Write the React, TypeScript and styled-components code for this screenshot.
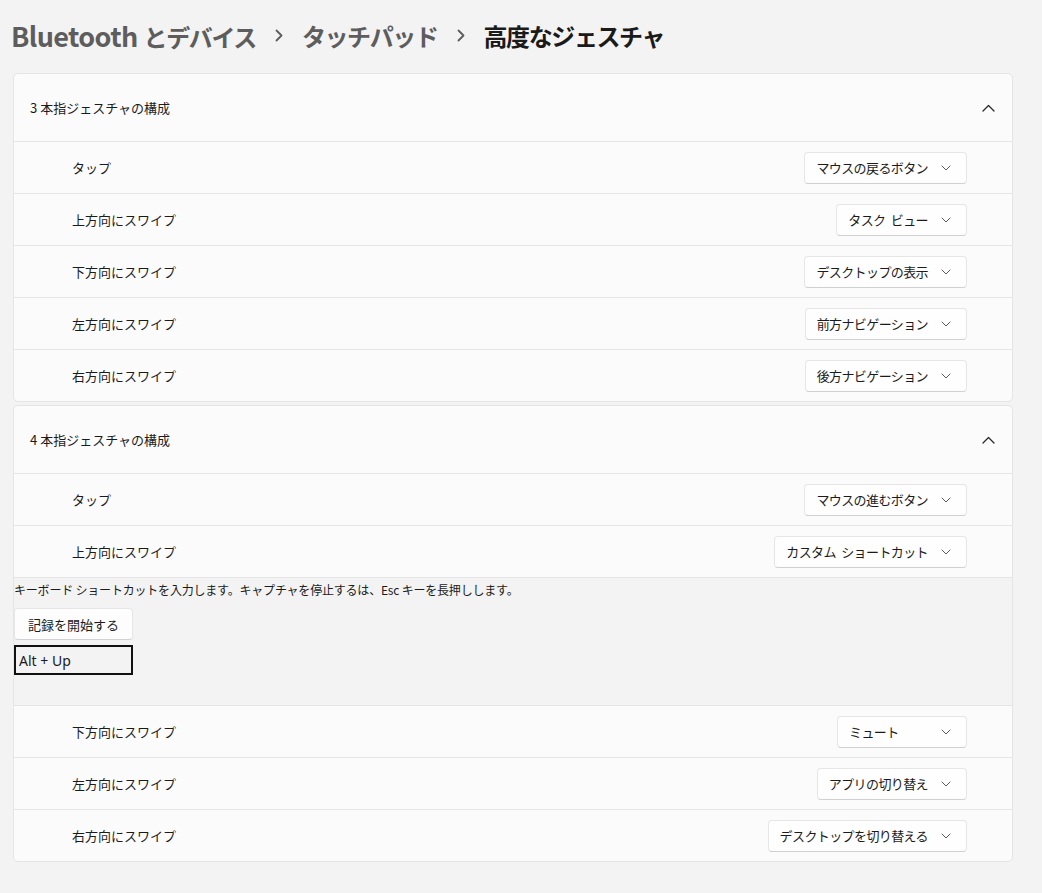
import * as React from 'react'
import styled, { createGlobalStyle } from 'styled-components'

const GlobalStyle = createGlobalStyle`
  html, body {
    margin: 0;
    padding: 0;
    background: #f3f3f3;
    font-family: "Noto Sans CJK JP", "Noto Sans", sans-serif;
    color: #1b1b1b;
  }
`

const Page = styled.div`
  width: 1042px;
  min-height: 893px;
  box-sizing: border-box;
  padding: 0 29px 0 13px;
`

const Breadcrumb = styled.h1`
  margin: 0 0 0 -2px;
  height: 73px;
  display: flex;
  align-items: center;
  gap: 19px;
  font-size: 24px;
  font-weight: 600;
  letter-spacing: -1.4px;
  padding-bottom: 2px;
  box-sizing: border-box;
`

const Crumb = styled.span<{ $current?: boolean }>`
  color: ${(p) => (p.$current ? '#1a1a1a' : '#5d5d5d')};
`

const Latin = styled.span`
  font-size: 27px;
  letter-spacing: -0.6px;
  margin-right: 6px;
`

const Sep = styled.span`
  display: flex;
  align-items: center;
  color: #5d5d5d;
`

const Card = styled.section`
  background: #fbfbfb;
  border: 1px solid #e5e5e5;
  border-radius: 5px;
  overflow: hidden;
  & + & {
    margin-top: 3px;
  }
`

const CardHeader = styled.div`
  height: 67px;
  display: flex;
  align-items: center;
  justify-content: space-between;
  padding: 0 17px 0 16px;
  font-size: 13px;
`

const Row = styled.div`
  height: 51px;
  border-top: 1px solid #e5e5e5;
  display: flex;
  align-items: center;
  justify-content: space-between;
  padding: 0 45px 0 58px;
  font-size: 13px;
`

const Select = styled.div`
  min-width: 130px;
  height: 32px;
  box-sizing: border-box;
  display: flex;
  align-items: center;
  justify-content: space-between;
  gap: 13px;
  padding: 0 15px 0 11px;
  background: #fefefe;
  border: 1px solid #e6e6e6;
  border-bottom-color: #d0d0d0;
  border-radius: 4px;
  font-size: 13px;
  letter-spacing: -0.6px;
  word-spacing: 3px;
  color: #1b1b1b;
`

const Panel = styled.div`
  height: 128px;
  border-top: 1px solid #e5e5e5;
  background: #f3f3f3;
  display: flex;
  flex-direction: column;
  align-items: flex-start;
  font-size: 12px;
  padding-top: 3px;
  box-sizing: border-box;
`

const Hint = styled.div`
  line-height: 18px;
  letter-spacing: -0.2px;
`

const RecordButton = styled.button`
  margin-top: 9px;
  width: 119px;
  height: 32px;
  background: #fdfdfd;
  border: 1px solid #e6e6e6;
  border-bottom-color: #d2d2d2;
  border-radius: 4px;
  font-family: inherit;
  font-size: 13px;
  color: #1b1b1b;
  padding: 0;
`

const ShortcutBox = styled.div`
  margin-top: 5px;
  width: 119px;
  height: 30px;
  box-sizing: border-box;
  border: 2px solid #111;
  display: flex;
  align-items: center;
  padding-left: 3px;
  font-family: "Noto Sans", sans-serif;
  font-size: 14px;
  color: #1b1b1b;
`

const ChevronDown = () => (
  <svg width="10" height="6" viewBox="0 0 10 6" fill="none">
    <path d="M1 1l4 4 4-4" stroke="#5a5a5a" strokeWidth="1" strokeLinecap="round" strokeLinejoin="round" />
  </svg>
)

const ChevronUp = () => (
  <svg width="13" height="8" viewBox="0 0 13 8" fill="none">
    <path d="M1 7l5.5-5.5L12 7" stroke="#2a2a2a" strokeWidth="1.3" strokeLinecap="round" strokeLinejoin="round" />
  </svg>
)

const CrumbChevron = () => (
  <svg width="8" height="13" viewBox="0 0 8 13" fill="none">
    <path d="M1.5 1.5l5 5-5 5" stroke="#5d5d5d" strokeWidth="1.8" strokeLinecap="round" strokeLinejoin="round" />
  </svg>
)

type Gesture = { label: string; value: string }

const GestureRow: React.FC<Gesture> = ({ label, value }) => (
  <Row>
    <span>{label}</span>
    <Select>
      <span>{value}</span>
      <ChevronDown />
    </Select>
  </Row>
)

const threeFinger: Gesture[] = [
  { label: 'タップ', value: 'マウスの戻るボタン' },
  { label: '上方向にスワイプ', value: 'タスク ビュー' },
  { label: '下方向にスワイプ', value: 'デスクトップの表示' },
  { label: '左方向にスワイプ', value: '前方ナビゲーション' },
  { label: '右方向にスワイプ', value: '後方ナビゲーション' },
]

const fourTop: Gesture[] = [
  { label: 'タップ', value: 'マウスの進むボタン' },
  { label: '上方向にスワイプ', value: 'カスタム ショートカット' },
]

const fourBottom: Gesture[] = [
  { label: '下方向にスワイプ', value: 'ミュート' },
  { label: '左方向にスワイプ', value: 'アプリの切り替え' },
  { label: '右方向にスワイプ', value: 'デスクトップを切り替える' },
]

export default function App() {
  return (
    <>
      <GlobalStyle />
      <Page>
        <Breadcrumb>
          <Crumb><Latin>Bluetooth</Latin>とデバイス</Crumb>
          <Sep><CrumbChevron /></Sep>
          <Crumb>タッチパッド</Crumb>
          <Sep><CrumbChevron /></Sep>
          <Crumb $current>高度なジェスチャ</Crumb>
        </Breadcrumb>

        <Card>
          <CardHeader>
            <span>3 本指ジェスチャの構成</span>
            <ChevronUp />
          </CardHeader>
          {threeFinger.map((g) => (
            <GestureRow key={g.label} {...g} />
          ))}
        </Card>

        <Card>
          <CardHeader>
            <span>4 本指ジェスチャの構成</span>
            <ChevronUp />
          </CardHeader>
          {fourTop.map((g) => (
            <GestureRow key={g.label} {...g} />
          ))}
          <Panel>
            <Hint>キーボード ショートカットを入力します。キャプチャを停止するは、Esc キーを長押しします。</Hint>
            <RecordButton>記録を開始する</RecordButton>
            <ShortcutBox>Alt + Up</ShortcutBox>
          </Panel>
          {fourBottom.map((g) => (
            <GestureRow key={g.label} {...g} />
          ))}
        </Card>
      </Page>
    </>
  )
}
